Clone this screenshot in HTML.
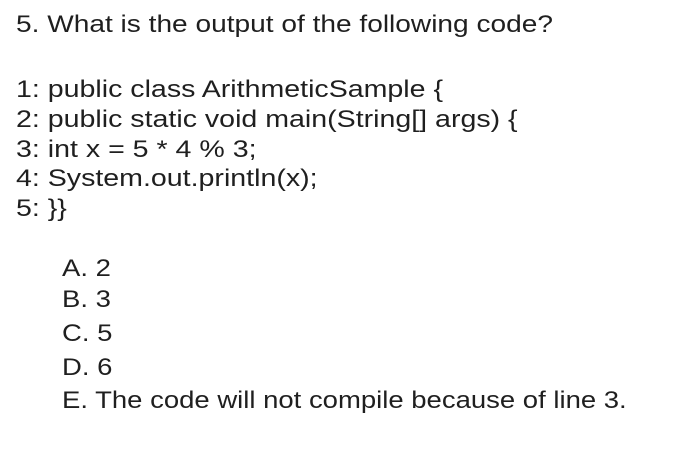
<!DOCTYPE html>
<html><head><meta charset="utf-8"><style>
html,body{margin:0;padding:0;background:#fff;width:697px;height:468px;overflow:hidden}
.t{position:absolute;font-family:"Liberation Sans",sans-serif;font-size:24px;color:#1f1f1f;white-space:nowrap;line-height:1;transform-origin:0 0;transform:scaleX(1.145)}
.h{transform:scaleX(1.17)}
.c{transform:scaleX(1.19)}
</style></head><body>
<div class="t h" style="left:16px;top:13px">5. What is the output of the following code?</div>
<div class="t c" style="left:16px;top:78px">1: public class ArithmeticSample {</div>
<div class="t c" style="left:16px;top:108px">2: public static void main(String[] args) {</div>
<div class="t c" style="left:16px;top:138px">3: int x = 5 * 4 % 3;</div>
<div class="t c" style="left:16px;top:167px">4: System.out.println(x);</div>
<div class="t c" style="left:16px;top:197px">5: }}</div>
<div class="t" style="left:62px;top:257px">A. 2</div>
<div class="t" style="left:62px;top:288px">B. 3</div>
<div class="t" style="left:62px;top:322px">C. 5</div>
<div class="t" style="left:62px;top:356px">D. 6</div>
<div class="t" style="left:62px;top:389px">E. The code will not compile because of line 3.</div>
</body></html>
